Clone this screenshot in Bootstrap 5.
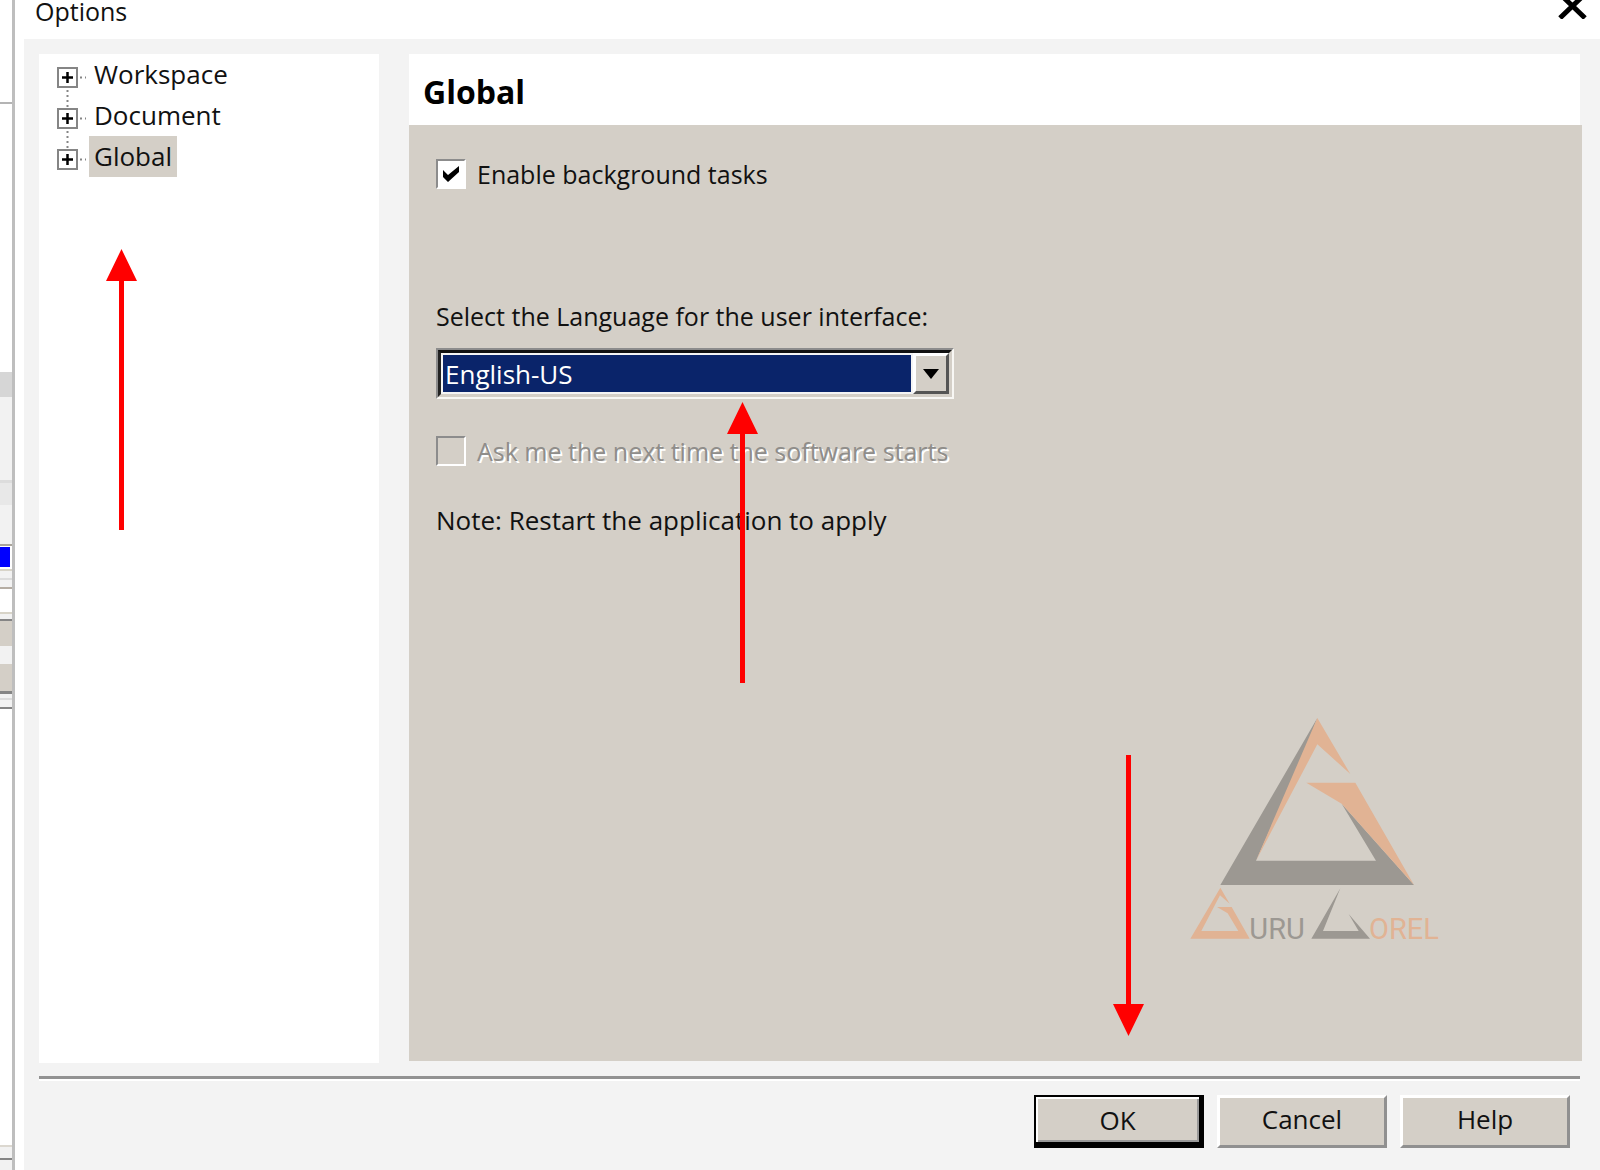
<!DOCTYPE html>
<html lang="en">
<head>
<meta charset="utf-8">
<meta name="viewport" content="width=device-width, initial-scale=1">
<title>Options</title>
<link href="https://cdn.jsdelivr.net/npm/bootstrap@5.3.0/dist/css/bootstrap.min.css" rel="stylesheet">
<style>
  :root { --face: #d4cfc7; --pane: #f3f3f3; --shade: #8c8c8c; --navy: #0a246a; }
  body { font-family: "Open Sans", "Noto Sans", sans-serif; font-size: 25px; line-height: 38px; color: #111; background: #fff; }

  /* sliver of the application window behind the dialog */
  .backdrop-strip {
    width: 15px; border-right: 3px solid #bebebe;
    background:
      linear-gradient(#00f, #00f) 0 547px / 10px 20px no-repeat,
      linear-gradient(#fff 102px, #b4b4b4 102px 104px, #fff 104px 372px, #d6d6d6 372px 397px,
        #f2f2f2 397px 480px, #dcdcdc 480px 483px, #e8e8e8 483px 505px, #f2f2f2 505px 544px,
        #aaa59c 544px 546px, #fff 546px 569px, #d8d4c8 569px 571px, #f2f2f2 571px 578px,
        #dcdcdc 578px 580px, #f2f2f2 580px 587px, #b5ada3 587px 589px, #fff 589px 612px,
        #d8d4c8 612px 614px, #f2f2f2 614px 619px, #858585 619px 621px, #d4cfc7 621px 646px,
        #f2f2f2 646px 664px, #d4cfc7 664px 691px, #858585 691px 694px, #f2f2f2 694px 698px,
        #dcdcdc 698px 700px, #f2f2f2 700px 707px, #858585 707px 709px, #fff 709px 1145px,
        #dcd8d0 1145px 1147px, #f2f2f2 1147px 1158px, #858585 1158px 1160px, #f2f2f2 1160px);
  }
  .dialog { padding-left: 9px; }
  .titlebar { height: 39px; padding: 0 12px 0 11px; }
  .title-text { line-height: 23px; }
  .close-x { line-height: 0; }
  .dialog-body { background: var(--pane); padding: 15px 18px 22px 15px; }
  .tree-pane { width: 340px; background: #fff; margin-right: 30px; padding-left: 18px; font-size: 26px; }
  .tree-row { height: 41px; }
  .expander svg { display: block; }
  .tree-label { line-height: 41px; padding: 0 5px; color: #111; text-decoration: none; }
  .tree-label.selected { background: var(--face); }
  .page-head { height: 71px; margin-right: 2px; padding: 16px 14px 0; background: #fff; }
  .page-head h1 { font-size: 32px; line-height: 44px; font-weight: 700; color: #000; }
  .page-body { background: var(--face); padding: 30px 27px; margin-bottom: 2px; }
  .tick-row { gap: 11px; }
  .tick {
    appearance: none; width: 30px; height: 30px; margin: 0; background: #fff;
    border: 2px solid; border-color: var(--shade) #fff #fff var(--shade); border-radius: 0;
  }
  .tick:checked {
    background: #fff url("data:image/svg+xml,%3Csvg xmlns='http://www.w3.org/2000/svg' viewBox='0 0 26 26'%3E%3Cpath d='M5 9l5 5 11-9v6l-11 10-5-5z' fill='%23000'/%3E%3C/svg%3E") center / 26px;
  }
  .tick:disabled { background: var(--face); }
  .tick:disabled + label { color: #8f8d8a; text-shadow: 2px 2px 0 #fff; }
  .language { margin-top: 104px; width: 518px; }
  .combo {
    margin-top: 13px; height: 51px; border: 2px solid; border-color: var(--shade) #f8f7f4 #f8f7f4 var(--shade);
  }
  .combo-inner { border: 3px solid; border-color: #111 var(--face) var(--face) #222; background: #fff; }
  .combo select {
    appearance: none; border: 2px solid #f4f4f4; border-radius: 0; background: var(--navy); color: #fff;
    padding: 0 2px; outline: 0; font-size: 26px; line-height: 36px;
  }
  .drop { width: 36px; background: var(--face); border: 3px solid; border-color: #fff #555 #555 #fff; }
  .ask { margin-top: 33px; }
  .note { margin-top: 31px; font-size: 26px; }
  .rule { margin-top: 13px; height: 5px; background: linear-gradient(#929292 3px, #fff 3px); margin-right: 2px; }
  .actions { margin-top: 14px; gap: 13px; padding-right: 12px; }
  .push {
    width: 170px; height: 53px; padding: 0 0 5px; color: #111; background: var(--face); font-size: 26px;
    border: 3px solid; border-color: #fff #909090 #909090 #fff; border-radius: 0;
  }
  .push.default { border: 2px solid #000; border-right-width: 5px; border-bottom-width: 6px; padding: 0;
    box-shadow: inset 2px 2px 0 #fff, inset -2px -2px 0 #999; }
  .pointer { position: absolute; fill: #f00; pointer-events: none; }
  .pointer-tree { left: 106px; top: 249px; }
  .pointer-combo { left: 727px; top: 402px; }
  .pointer-ok { right: 456px; bottom: 134px; }
  .watermark { position: absolute; right: 140px; bottom: 210px; pointer-events: none; }
  .watermark text { font-family: Roboto, sans-serif; font-size: 87px; }
</style>
</head>
<body>
<div class="d-flex min-vh-100 position-relative">
  <div class="backdrop-strip flex-shrink-0"></div>

  <div class="dialog d-flex flex-column flex-grow-1">
    <header class="titlebar d-flex justify-content-between align-items-start">
      <span class="title-text">Options</span>
      <button type="button" class="close-x btn p-0 border-0" aria-label="Close">
        <svg width="32" height="19" viewBox="0 0 32 19" fill="none" stroke="#000" stroke-width="5"><path d="M4-6L29 18M29-6L4 18"/></svg>
      </button>
    </header>

    <div class="dialog-body d-flex flex-column flex-grow-1">
      <div class="d-flex flex-grow-1">
        <nav class="tree-pane flex-shrink-0">
          <ul class="list-unstyled m-0">
            <li class="tree-row d-flex">
              <button type="button" class="expander btn p-0 border-0" aria-label="Expand Workspace">
                <svg width="32" height="41" viewBox="0 1 32 41" fill="none" stroke="#858585" stroke-width="2"><path d="M1 15h19v19H1z"/><path d="M23 24.500h6M10.500 37v5" stroke-dasharray="2 3"/><path d="M5 24.500h11M10.500 19v11" stroke="#000" stroke-width="2.500"/></svg>
              </button>
              <a href="#" class="tree-label">Workspace</a>
            </li>
            <li class="tree-row d-flex">
              <button type="button" class="expander btn p-0 border-0" aria-label="Expand Document">
                <svg width="32" height="41" viewBox="0 1 32 41" fill="none" stroke="#858585" stroke-width="2"><path d="M1 15h19v19H1z"/><path d="M23 24.500h6M10.500 1v12M10.500 37v5" stroke-dasharray="2 3"/><path d="M5 24.500h11M10.500 19v11" stroke="#000" stroke-width="2.500"/></svg>
              </button>
              <a href="#" class="tree-label">Document</a>
            </li>
            <li class="tree-row d-flex">
              <button type="button" class="expander btn p-0 border-0" aria-label="Expand Global">
                <svg width="32" height="41" viewBox="0 1 32 41" fill="none" stroke="#858585" stroke-width="2"><path d="M1 15h19v19H1z"/><path d="M23 24.500h6M10.500 1v12" stroke-dasharray="2 3"/><path d="M5 24.500h11M10.500 19v11" stroke="#000" stroke-width="2.500"/></svg>
              </button>
              <a href="#" class="tree-label selected" aria-current="page">Global</a>
            </li>
          </ul>
        </nav>

        <main class="d-flex flex-column flex-grow-1">
          <div class="page-head"><h1 class="m-0">Global</h1></div>
          <form class="page-body flex-grow-1">
            <div class="tick-row d-flex align-items-center">
              <input class="tick" type="checkbox" id="background" checked>
              <label for="background">Enable background tasks</label>
            </div>
            <div class="language">
              <label class="d-block text-nowrap" for="language">Select the Language for the user interface:</label>
              <div class="combo d-flex">
                <div class="combo-inner d-flex flex-grow-1">
                  <select id="language" class="flex-grow-1">
                    <option>English-US</option>
                  </select>
                  <span class="drop d-flex align-items-center justify-content-center" aria-hidden="true">
                    <svg width="16" height="10"><path d="M0 0h16L8 10z"/></svg>
                  </span>
                </div>
              </div>
            </div>
            <div class="ask tick-row d-flex align-items-center">
              <input class="tick" type="checkbox" id="ask" disabled>
              <label for="ask">Ask me the next time the software starts</label>
            </div>
            <p class="note mb-0">Note: Restart the application to apply</p>
          </form>
        </main>
      </div>

      <div class="rule"></div>
      <footer class="actions d-flex justify-content-end">
        <button type="button" class="push default">OK</button>
        <button type="button" class="push">Cancel</button>
        <button type="button" class="push">Help</button>
      </footer>
    </div>
  </div>

  <svg class="watermark" width="290" height="260" viewBox="0 0 870 780" role="img" aria-label="Guru Corel">
    <g fill="#9c9892">
      <path d="M442 54L151 555H732L515 311L618 482H258L400 165z"/>
      <path d="M511 565L424 716H600L536 642L566 693H459z"/>
      <text x="238" y="716">URU</text>
    </g>
    <g fill="#e1b394">
      <path d="M442 54L541 222L442 133L258 482z"/>
      <path d="M409 248H556L732 555L515 311z"/>
      <path d="M151 563L179 611L150 586L94 693H205L173 640L141 621H185L239 716H61z"/>
      <text x="597" y="716">OREL</text>
    </g>
  </svg>

  <svg class="pointer pointer-tree" width="31" height="281" aria-hidden="true"><path d="M15.500 0L31 32H18V281H13V32H0z"/></svg>
  <svg class="pointer pointer-combo" width="31" height="281" aria-hidden="true"><path d="M15.500 0L31 32H18V281H13V32H0z"/></svg>
  <svg class="pointer pointer-ok" width="31" height="281" aria-hidden="true"><path d="M15.500 281L31 249H18V0H13V249H0z"/></svg>
</div>
<script src="https://cdn.jsdelivr.net/npm/bootstrap@5.3.0/dist/js/bootstrap.bundle.min.js"></script>
</body>
</html>
